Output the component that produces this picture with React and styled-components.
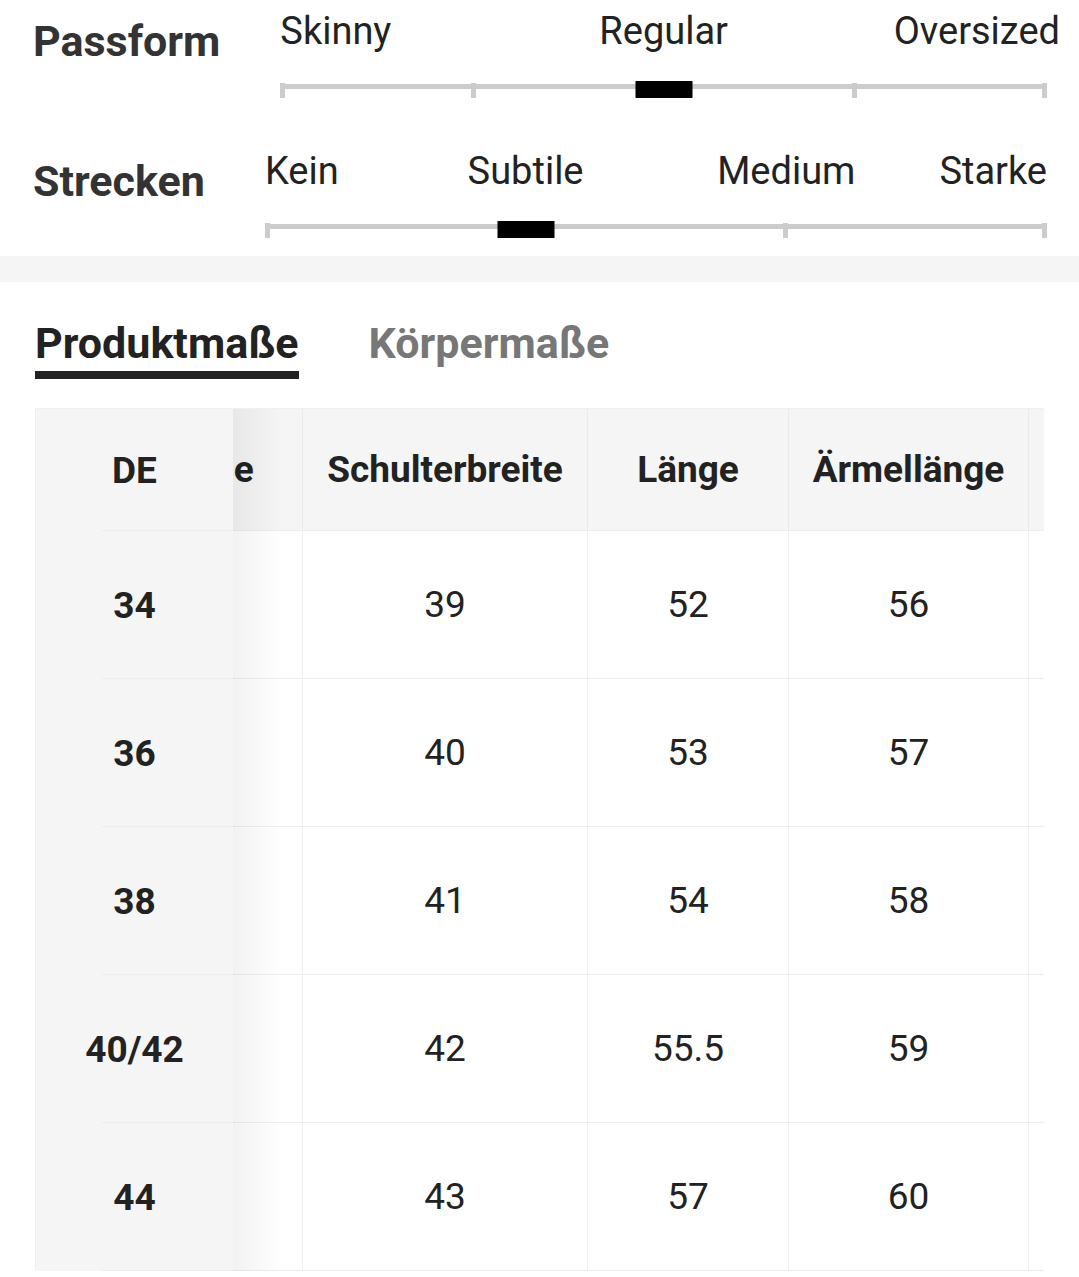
import React, { useLayoutEffect, useRef } from "react";
import styled, { createGlobalStyle } from "styled-components";

const fits = [
  {
    title: "Passform",
    ticks: 5,
    value: 2,
    labels: [
      { text: "Skinny", at: 0 },
      { text: "Regular", at: 2 },
      { text: "Oversized", at: 4, nudge: 13 },
    ],
  },
  {
    title: "Strecken",
    ticks: 4,
    value: 1,
    labels: [
      { text: "Kein", at: 0 },
      { text: "Subtile", at: 1 },
      { text: "Medium", at: 2 },
      { text: "Starke", at: 3 },
    ],
  },
];

const columns = [
  { key: "de", title: "DE", width: 197 },
  { key: "size", title: "Größe", width: 200 },
  { key: "shoulder", title: "Schulterbreite", width: 285 },
  { key: "length", title: "Länge", width: 201 },
  { key: "sleeve", title: "Ärmellänge", width: 240 },
  { key: "bust", title: "Brustumfang", width: 260 },
];

const rows = [
  { de: "34", size: "XS", shoulder: "39", length: "52", sleeve: "56", bust: "92" },
  { de: "36", size: "S", shoulder: "40", length: "53", sleeve: "57", bust: "96" },
  { de: "38", size: "M", shoulder: "41", length: "54", sleeve: "58", bust: "100" },
  { de: "40/42", size: "L", shoulder: "42", length: "55.5", sleeve: "59", bust: "106" },
  { de: "44", size: "XL", shoulder: "43", length: "57", sleeve: "60", bust: "112" },
];

const labelColumn = (at, ticks) => {
  const n = (ticks - 1) * 2;
  if (at === 0) return { col: "1 / 2", align: "start" };
  if (at === ticks - 1) return { col: `${n} / ${n + 1}`, align: "end" };
  return { col: `${at * 2} / ${at * 2 + 2}`, align: "center" };
};

const FitSlider = ({ fit }) => {
  const cols = (fit.ticks - 1) * 2;
  return (
    <FitRow>
      <FitTitle>{fit.title}</FitTitle>
      <Slider>
        <SliderLabels $cols={cols}>
          {fit.labels.map((l) => {
            const { col, align } = labelColumn(l.at, fit.ticks);
            return (
              <SliderLabel key={l.text} $col={col} $align={align} $nudge={l.nudge}>
                {l.text}
              </SliderLabel>
            );
          })}
        </SliderLabels>
        <Track>
          {Array.from({ length: fit.ticks }).map((_, i) => (
            <Tick key={i} />
          ))}
          <Thumb style={{ left: `${(fit.value / (fit.ticks - 1)) * 100}%` }} />
        </Track>
      </Slider>
    </FitRow>
  );
};

const App = () => {
  const scrollRef = useRef(null);

  useLayoutEffect(() => {
    if (scrollRef.current) scrollRef.current.scrollLeft = 130;
  }, []);

  return (
    <>
      <GlobalStyle />
      <FitSection>
        {fits.map((fit) => (
          <FitSlider key={fit.title} fit={fit} />
        ))}
      </FitSection>
      <Band />
      <Tabs>
        <Tab $active>Produktmaße</Tab>
        <Tab>Körpermaße</Tab>
      </Tabs>
      <Scroller ref={scrollRef}>
        <Grid $cols={columns.map((c) => `${c.width}px`).join(" ")}>
          {columns.map((c, i) => (
            <HeadCell key={c.key} $sticky={i === 0}>
              {c.title}
            </HeadCell>
          ))}
          {rows.map((r) =>
            columns.map((c, i) => (
              <Cell key={r.de + c.key} $sticky={i === 0}>
                {r[c.key]}
              </Cell>
            ))
          )}
        </Grid>
      </Scroller>
    </>
  );
};

const GlobalStyle = createGlobalStyle`
  body {
    margin: 0;
    background: #ffffff;
    color: #222222;
    font-family: Roboto, "Noto Sans", Arial, sans-serif;
  }
`;

const FitSection = styled.section`
  display: flex;
  flex-direction: column;
  gap: 24px;
  padding: 0 32px 0 33px;
`;

const FitRow = styled.div`
  display: flex;
  align-items: flex-start;
  gap: 60px;
  padding-bottom: 18px;
`;

const FitTitle = styled.div`
  margin-top: 16px;
  font-size: 43px;
  line-height: 50px;
  font-weight: 700;
  color: #333333;
  white-space: nowrap;
`;

const Slider = styled.div`
  flex: 1;
  padding-top: 9px;
`;

const SliderLabels = styled.div`
  display: grid;
  grid-template-columns: repeat(${({ $cols }) => $cols}, minmax(0, 1fr));
  font-size: 38px;
  line-height: 44px;
  color: #222222;
`;

const SliderLabel = styled.span`
  grid-column: ${({ $col }) => $col};
  justify-self: ${({ $align }) => $align};
  white-space: nowrap;
  margin-right: ${({ $nudge }) => ($nudge ? `-${$nudge}px` : "0")};
`;

const Track = styled.div`
  position: relative;
  margin-top: 30px;
  height: 15px;
  display: flex;
  justify-content: space-between;
  background: linear-gradient(#cccccc, #cccccc) no-repeat 0 1px / 100% 5px;
`;

const Tick = styled.span`
  width: 5px;
  height: 15px;
  background: #cccccc;
`;

const Thumb = styled.span`
  position: absolute;
  top: -2px;
  width: 57px;
  height: 17px;
  background: #000000;
  transform: translateX(-50%);
`;

const Band = styled.div`
  height: 26px;
  background: #f5f5f5;
`;

const Tabs = styled.div`
  display: flex;
  gap: 70px;
  padding: 36px 35px 0;
`;

const Tab = styled.div`
  font-size: 43px;
  line-height: 50px;
  font-weight: 700;
  color: ${({ $active }) => ($active ? "#222222" : "#777777")};
  padding-bottom: 3px;
  border-bottom: 8px solid ${({ $active }) => ($active ? "#222222" : "transparent")};
`;

const Scroller = styled.div`
  margin: 29px 35px 0 35px;
  border-left: 1px solid #eeeeee;
  overflow-x: auto;
  scrollbar-width: none;

  &::-webkit-scrollbar {
    display: none;
  }
`;

const Grid = styled.div`
  display: grid;
  width: max-content;
  grid-template-columns: ${({ $cols }) => $cols};
  grid-template-rows: 123px;
  grid-auto-rows: 148px;
`;

const BaseCell = styled.div`
  box-sizing: border-box;
  display: flex;
  align-items: center;
  justify-content: center;
  font-size: 37px;
  color: #222222;
  white-space: nowrap;
  border-right: 1px solid #eeeeee;
  border-bottom: 1px solid #eeeeee;

  ${({ $sticky }) =>
    $sticky &&
    `
    position: sticky;
    left: 0;
    z-index: 1;
    border-right: none;
    border-bottom: none;
    font-weight: 700;
    background: linear-gradient(#ececec, #ececec) no-repeat 66px 100% / calc(100% - 66px) 1px, #f5f5f5;

    &::after {
      content: "";
      position: absolute;
      top: 0;
      bottom: 0;
      left: 100%;
      width: 50px;
      pointer-events: none;
      background: linear-gradient(90deg, rgba(0, 0, 0, 0.05), rgba(0, 0, 0, 0));
    }
  `}
`;

const HeadCell = styled(BaseCell)`
  font-weight: 700;
  background-color: #f5f5f5;
  border-top: 1px solid #f0f0f0;
  border-right-color: #ebebeb;
`;

const Cell = styled(BaseCell)`
  background-color: ${({ $sticky }) => ($sticky ? "#f5f5f5" : "#ffffff")};
`;

export default App;
